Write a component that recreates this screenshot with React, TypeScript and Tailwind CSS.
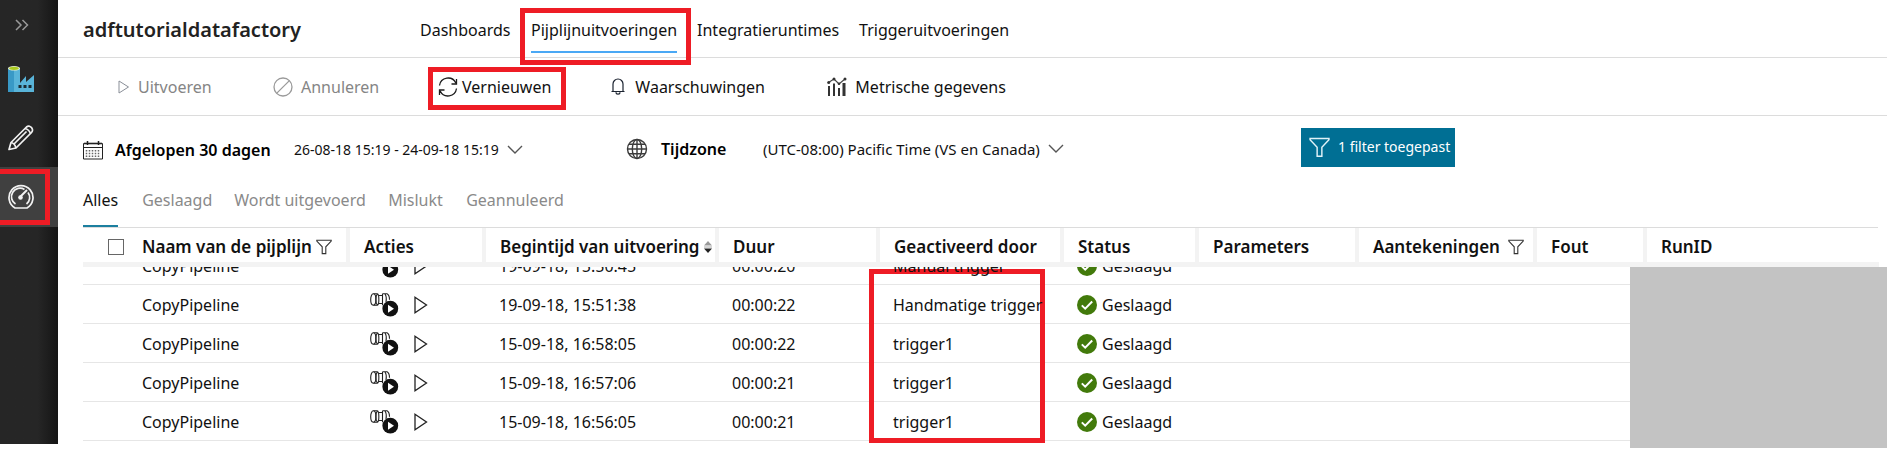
import type { ReactNode } from 'react';

type Run = { start: string; duration: string; trigger: string };

const runs: Run[] = [
  { start: '19-09-18, 15:50:45', duration: '00:00:20', trigger: 'Manual trigger' },
  { start: '19-09-18, 15:51:38', duration: '00:00:22', trigger: 'Handmatige trigger' },
  { start: '15-09-18, 16:58:05', duration: '00:00:22', trigger: 'trigger1' },
  { start: '15-09-18, 16:57:06', duration: '00:00:21', trigger: 'trigger1' },
  { start: '15-09-18, 16:56:05', duration: '00:00:21', trigger: 'trigger1' },
];

function Highlight({ className }: { className: string }) {
  return <span aria-hidden="true" className={`pointer-events-none absolute border-5 border-[#ee1c25] ${className}`} />;
}

function FactoryIcon() {
  return (
    <svg width="26" height="26" viewBox="0 0 26 26" aria-hidden="true">
      <path d="M0 2h12v24H0z" fill="#3999c6" />
      <path d="M6 2h6v24H6z" fill="#59b4d9" />
      <path d="M12 17l6-7v6l8-7v17H12z" fill="#59b4d9" />
      <ellipse cx="6" cy="2.300" rx="6" ry="2.300" fill="#e8f0d0" />
      <ellipse cx="6" cy="2.300" rx="4.800" ry="1.600" fill="#a9c91e" />
      <path d="M10.500 19h3v3h-3zM15.500 19h3v3h-3zM20.500 19h3v3h-3z" fill="#1b2b33" />
    </svg>
  );
}

function PencilIcon() {
  return (
    <svg width="26" height="26" viewBox="0 0 26 26" fill="none" stroke="#f2f2f2" strokeWidth="1.700" strokeLinejoin="round" aria-hidden="true">
      <path d="M1 24.500l2-7L18.500 2q1.500-1.300 3-.8 2.600 1 3 3.300.3 1.500-1 3L8 23z" />
      <path d="M3 17.500q3.800.8 5 5.500M17 3.500q4 1 5.500 5M18.500 6.500L6 19" />
    </svg>
  );
}

function GaugeIcon() {
  return (
    <svg width="26" height="26" viewBox="0 0 26 26" fill="none" stroke="#f2f2f2" strokeWidth="1.700" aria-hidden="true">
      <path d="M7 24A12 12 0 1 1 19 24z" />
      <path d="M7.500 20A8.300 8.300 0 0 1 16.500 5.500M20 8.500A8.300 8.300 0 0 1 18.500 20" />
      <path d="M12 13L19 6" strokeWidth="2" />
      <circle cx="12.500" cy="13.500" r="2.300" fill="#f2f2f2" stroke="none" />
    </svg>
  );
}

function FunnelIcon({ size = 16, stroke = '#333333' }: { size?: number; stroke?: string }) {
  return (
    <svg width={size} height={size} viewBox="0 0 16 16" fill="none" stroke={stroke} strokeWidth="1.100" aria-hidden="true">
      <path d="M.8 1.200h14.400v.8L9.800 7.800V14.600H6.200V7.800L.8 2z" />
    </svg>
  );
}

function ChevronIcon() {
  return (
    <svg width="16" height="10" viewBox="0 0 16 10" fill="none" stroke="#555" strokeWidth="1.400" aria-hidden="true">
      <path d="M1 1l7 7 7-7" />
    </svg>
  );
}

function CalendarIcon() {
  return (
    <svg width="20" height="20" viewBox="0 0 20 20" fill="none" stroke="#222" aria-hidden="true">
      <path d="M.5 3.500h19v15.500H.5zM.5 7.500h19" />
      <path d="M1 3.500h18" strokeWidth="1.600" />
      <path d="M4.500 1v4M15.500 1v4" strokeWidth="1.500" />
      <path d="M3.500 10v8M6.500 10v8M9.500 10v8M12.500 10v8M15.500 10v8" strokeWidth="1.500" strokeDasharray="1.500 1.200" stroke="#666" />
    </svg>
  );
}

function GlobeIcon() {
  return (
    <svg width="22" height="22" viewBox="0 0 22 22" fill="none" stroke="#3c3c3c" strokeWidth="1.400" aria-hidden="true">
      <circle cx="11" cy="11" r="9.500" />
      <ellipse cx="11" cy="11" rx="4.700" ry="9.500" />
      <path d="M11 1.500v19M1.500 11h19M3 6.200h16M3 15.800h16" />
    </svg>
  );
}

function PlayOutline({ small }: { small?: boolean }) {
  return small ? (
    <svg width="12" height="14" viewBox="0 0 12 14" fill="none" stroke="#8a8f98" aria-hidden="true">
      <path d="M1 1l9.500 6L1 13z" />
    </svg>
  ) : (
    <svg width="14" height="18" viewBox="0 0 14 18" fill="none" stroke="#222" strokeWidth="1.300" aria-hidden="true">
      <path d="M1 1.300L12.500 9 1 16.700z" />
    </svg>
  );
}

function BanIcon() {
  return (
    <svg width="20" height="20" viewBox="0 0 20 20" fill="none" stroke="#9a9a9a" strokeWidth="1.300" aria-hidden="true">
      <circle cx="10" cy="10" r="9" />
      <path d="M3.600 16.400L16.400 3.600" />
    </svg>
  );
}

function RefreshIcon() {
  return (
    <svg width="20" height="20" viewBox="0 0 20 20" fill="none" stroke="#1b1b1b" strokeWidth="1.300" aria-hidden="true">
      <path d="M1.500 8.500A8.600 8.600 0 0 1 17.800 6M18.500 2v5h-5" />
      <path d="M18.500 11.500A8.600 8.600 0 0 1 2.200 14M1.500 18v-5h5" />
    </svg>
  );
}

function BellIcon() {
  return (
    <svg width="14" height="17" viewBox="0 0 14 17" fill="none" stroke="#1b2330" strokeWidth="1.200" aria-hidden="true">
      <path d="M.5 13.500h13M2 13.500V6a5 5 0 0 1 10 0v7.500M5 14.200a2 1.900 0 0 0 4 0" />
    </svg>
  );
}

function MetricsIcon() {
  return (
    <svg width="20" height="20" viewBox="0 0 20 20" aria-hidden="true">
      <path d="M1 9h2v10H1zM6 6.500h2V19H6zM11 11h2v8h-2zM15.500 6h3v13h-3z" fill="#333" />
      <path d="M1.500 5.500L7 2l5 5 6-5" fill="none" stroke="#444" strokeWidth="1.200" />
      <circle cx="1.700" cy="5.500" r="1.500" fill="#333" />
      <circle cx="7" cy="2" r="1.500" fill="#333" />
      <circle cx="12" cy="6.800" r="1.300" fill="#333" />
      <circle cx="18" cy="2" r="1.500" fill="#333" />
    </svg>
  );
}

function ActivityRunsIcon() {
  return (
    <svg width="29" height="24" viewBox="0 0 29 24" fill="none" stroke="#222" strokeWidth="1.100" aria-hidden="true">
      <ellipse cx="3.300" cy="6.500" rx="2.600" ry="5.700" />
      <path d="M3.500.8h4M3.500 12.200h4M7.500.8c-2.200 2-2.200 9.400 0 11.400M7.500.8c1.800 1 1.800 10.400 0 11.400" />
      <path d="M9 2.500h3M9 10.500h3M12.500.8v11.400M12.500.8h4.500c1.600.8 2.500 3 2.500 6M15 1c1.300 1.800 1.500 5 1 8" />
      <circle cx="20.300" cy="15.700" r="7.900" fill="#111" stroke="none" />
      <path d="M18 11.700l6 4-6 4z" fill="#fff" stroke="none" />
    </svg>
  );
}

function SuccessIcon() {
  return (
    <svg width="20" height="20" viewBox="0 0 20 20" aria-hidden="true">
      <circle cx="10" cy="10" r="10" fill="#427a0b" />
      <path d="M4.800 10.400l3.400 3.300 7-7.200" fill="none" stroke="#fff" strokeWidth="2" />
    </svg>
  );
}

function SortIcon() {
  return (
    <svg width="8" height="14" viewBox="0 0 8 14" aria-hidden="true">
      <path d="M4 1l4 4.500H0z" fill="#999" />
      <path d="M4 13l4-4.500H0z" fill="#222" />
      <path d="M0 7h8" stroke="#aaa" />
    </svg>
  );
}

function Header({ children, first, className = '' }: { children: ReactNode; first?: boolean; className?: string }) {
  return (
    <th scope="col" className={`p-0 text-left text-[17px] font-semibold ${className}`}>
      <div className={`flex h-[34px] items-center gap-1 pt-1 whitespace-nowrap ${first ? 'pl-[25px]' : 'border-l-4 border-[#f3f3f3] pl-3.5'}`}>
        {children}
      </div>
    </th>
  );
}

function Cell({ children, clipped, className = '' }: { children?: ReactNode; clipped: boolean; className?: string }) {
  return (
    <td className={`border-b border-[#e6e6e6] p-0 ${className}`}>
      <div className={clipped ? 'flex h-[17px] items-end overflow-hidden' : 'flex h-[38px] items-end'}>
        <div className="relative z-10 flex h-[38px] shrink-0 items-center pt-0.5 whitespace-nowrap">{children}</div>
      </div>
    </td>
  );
}

function Sidebar() {
  return (
    <aside className="mb-[7px] flex w-[58px] shrink-0 flex-col bg-linear-to-r from-[#262626] from-65% to-[#151515]">
      <button aria-label="Menu uitvouwen" className="flex h-[50px] items-center pl-[15px]">
        <svg width="14" height="12" viewBox="0 0 14 12" fill="none" stroke="#999" strokeWidth="1.500" aria-hidden="true">
          <path d="M1 1l5 5-5 5M7.500 1l5 5-5 5" />
        </svg>
      </button>
      <a href="#overzicht" aria-label="Overzicht" className="flex h-[58px] items-center pl-2"><FactoryIcon /></a>
      <a href="#ontwerpen" aria-label="Ontwerpen" className="flex h-[59px] items-center pl-2"><PencilIcon /></a>
      <a href="#bewaken" aria-label="Bewaken" className="relative flex h-[60px] items-center bg-[#404040] pl-2">
        <GaugeIcon />
        <Highlight className="top-0.5 right-2 bottom-0.5 left-0 border-l-0" />
      </a>
    </aside>
  );
}

export default function App() {
  return (
    <div className="flex min-h-screen overflow-hidden bg-white font-['Noto_Sans','Open_Sans',sans-serif] text-base leading-6 text-[#111]">
      <Sidebar />
      <main className="min-w-0 flex-1">
        <header className="flex h-[58px] items-center border-b border-[#dcdcdc] pl-[25px]">
          <h1 className="w-[337px] shrink-0 pt-0.5 text-xl font-semibold text-[#222]">adftutorialdatafactory</h1>
          <nav className="flex h-full whitespace-nowrap">
            <a href="#dashboards" className="flex w-[111px] items-center pt-0.5">Dashboards</a>
            <a href="#pijplijn" className="relative mr-5 flex items-center pt-0.5">
              Pijplijnuitvoeringen
              <span className="absolute right-0 bottom-1 left-0 h-0.5 bg-[#4aa8f5]" />
              <Highlight className="-right-3.5 -bottom-2 -left-[11px] top-2 z-20" />
            </a>
            <a href="#runtimes" className="flex w-[162px] items-center pt-0.5">Integratieruntimes</a>
            <a href="#triggers" className="flex items-center pt-0.5">Triggeruitvoeringen</a>
          </nav>
        </header>

        <div className="flex h-[58px] items-center border-b border-[#dcdcdc] pl-[60px] whitespace-nowrap">
          <button disabled className="flex w-[155px] shrink-0 items-center gap-2 text-[#858585]"><PlayOutline small />Uitvoeren</button>
          <button disabled className="flex w-[165px] shrink-0 items-center gap-2 text-[#858585]"><BanIcon />Annuleren</button>
          <button className="relative mr-[60px] flex shrink-0 items-center gap-1">
            <RefreshIcon />Vernieuwen
            <Highlight className="-top-2 -right-[15px] -bottom-[11px] -left-2.5" />
          </button>
          <button className="flex w-[216px] shrink-0 items-center gap-2.5"><BellIcon />Waarschuwingen</button>
          <button className="flex items-center gap-2"><MetricsIcon />Metrische gegevens</button>
        </div>

        <div className="flex h-[66px] items-center pl-[25px] whitespace-nowrap">
          <div className="flex w-[543px] shrink-0 items-center pt-0.5">
            <span className="flex w-8"><CalendarIcon /></span>
            <span className="w-[179px] font-semibold text-black">Afgelopen 30 dagen</span>
            <button className="flex items-center gap-2 text-sm">26-08-18 15:19 - 24-09-18 15:19<ChevronIcon /></button>
          </div>
          <div className="flex w-[675px] shrink-0 items-center">
            <span className="flex w-[35px]"><GlobeIcon /></span>
            <label htmlFor="zone" className="w-[102px] font-semibold text-black">Tijdzone</label>
            <div className="flex items-center gap-2">
              <select id="zone" className="appearance-none bg-transparent text-[15px]">
                <option>(UTC-08:00) Pacific Time (VS en Canada)</option>
              </select>
              <ChevronIcon />
            </div>
          </div>
          <button className="mb-1 flex h-[39px] w-[154px] shrink-0 items-center gap-2 bg-[#006f94] pl-2 text-sm text-white"><FunnelIcon size={21} stroke="#e0f2f8" />1 filter toegepast</button>
        </div>

        <nav className="mr-[9px] ml-[25px] flex h-[46px] border-b border-[#dcdcdc] whitespace-nowrap text-[#8a8a8a]">
          <button className="mr-6 flex items-center border-b-2 border-[#1c7f9f] pb-2 text-[#111]">Alles</button>
          <button className="w-[92px] pb-2.5 text-left">Geslaagd</button>
          <button className="w-[154px] pb-2.5 text-left">Wordt uitgevoerd</button>
          <button className="w-[78px] pb-2.5 text-left">Mislukt</button>
          <button className="pb-2.5 text-left">Geannuleerd</button>
        </nav>

        <section className="relative pr-2 pl-[25px]">
          <table className="w-full table-fixed border-separate border-spacing-0">
            <colgroup>
              <col className="w-[263px]" />
              <col className="w-[136px]" />
              <col className="w-[233px]" />
              <col className="w-[161px]" />
              <col className="w-[184px]" />
              <col className="w-[135px]" />
              <col className="w-[160px]" />
              <col className="w-[178px]" />
              <col className="w-[110px]" />
              <col />
            </colgroup>
            <thead>
              <tr className="*:border-b-5 *:border-[#f3f3f3]">
                <Header first>
                  <input type="checkbox" aria-label="Alles selecteren" className="mr-3.5 size-4 shrink-0 appearance-none border border-[#666] bg-white" />
                  Naam van de pijplijn <FunnelIcon />
                </Header>
                <Header>Acties</Header>
                <Header>Begintijd van uitvoering <SortIcon /></Header>
                <Header>Duur</Header>
                <Header className="relative">
                  Geactiveerd door
                  <Highlight className="top-[41px] -left-[7px] h-[174px] w-[176px]" />
                </Header>
                <Header>Status</Header>
                <Header>Parameters</Header>
                <Header>Aantekeningen<span className="ml-1"><FunnelIcon /></span></Header>
                <Header>Fout</Header>
                <Header>RunID</Header>
              </tr>
            </thead>
            <tbody>
              {runs.map((run, index) => {
                const clipped = index === 0;
                return (
                  <tr key={run.start}>
                    <Cell clipped={clipped} className="pl-[59px]">CopyPipeline</Cell>
                    <Cell clipped={clipped} className="pl-6">
                      <button aria-label="Activiteituitvoeringen weergeven" className="mr-[15px]"><ActivityRunsIcon /></button>
                      <button aria-label="Opnieuw uitvoeren"><PlayOutline /></button>
                    </Cell>
                    <Cell clipped={clipped} className="pl-[17px]">{run.start}</Cell>
                    <Cell clipped={clipped} className="pl-[17px]">{run.duration}</Cell>
                    <Cell clipped={clipped} className="pl-[17px]">{run.trigger}</Cell>
                    <Cell clipped={clipped} className="pl-[17px]">
                      <span className="mr-[5px]"><SuccessIcon /></span>Geslaagd
                    </Cell>
                    <Cell clipped={clipped} />
                    <Cell clipped={clipped} />
                    <Cell clipped={clipped} />
                    <Cell clipped={clipped} />
                  </tr>
                );
              })}
            </tbody>
          </table>
          <div className="absolute top-[39px] right-0 z-20 h-[181px] w-[257px] bg-[#c3c3c3]" />
        </section>
      </main>
    </div>
  );
}
